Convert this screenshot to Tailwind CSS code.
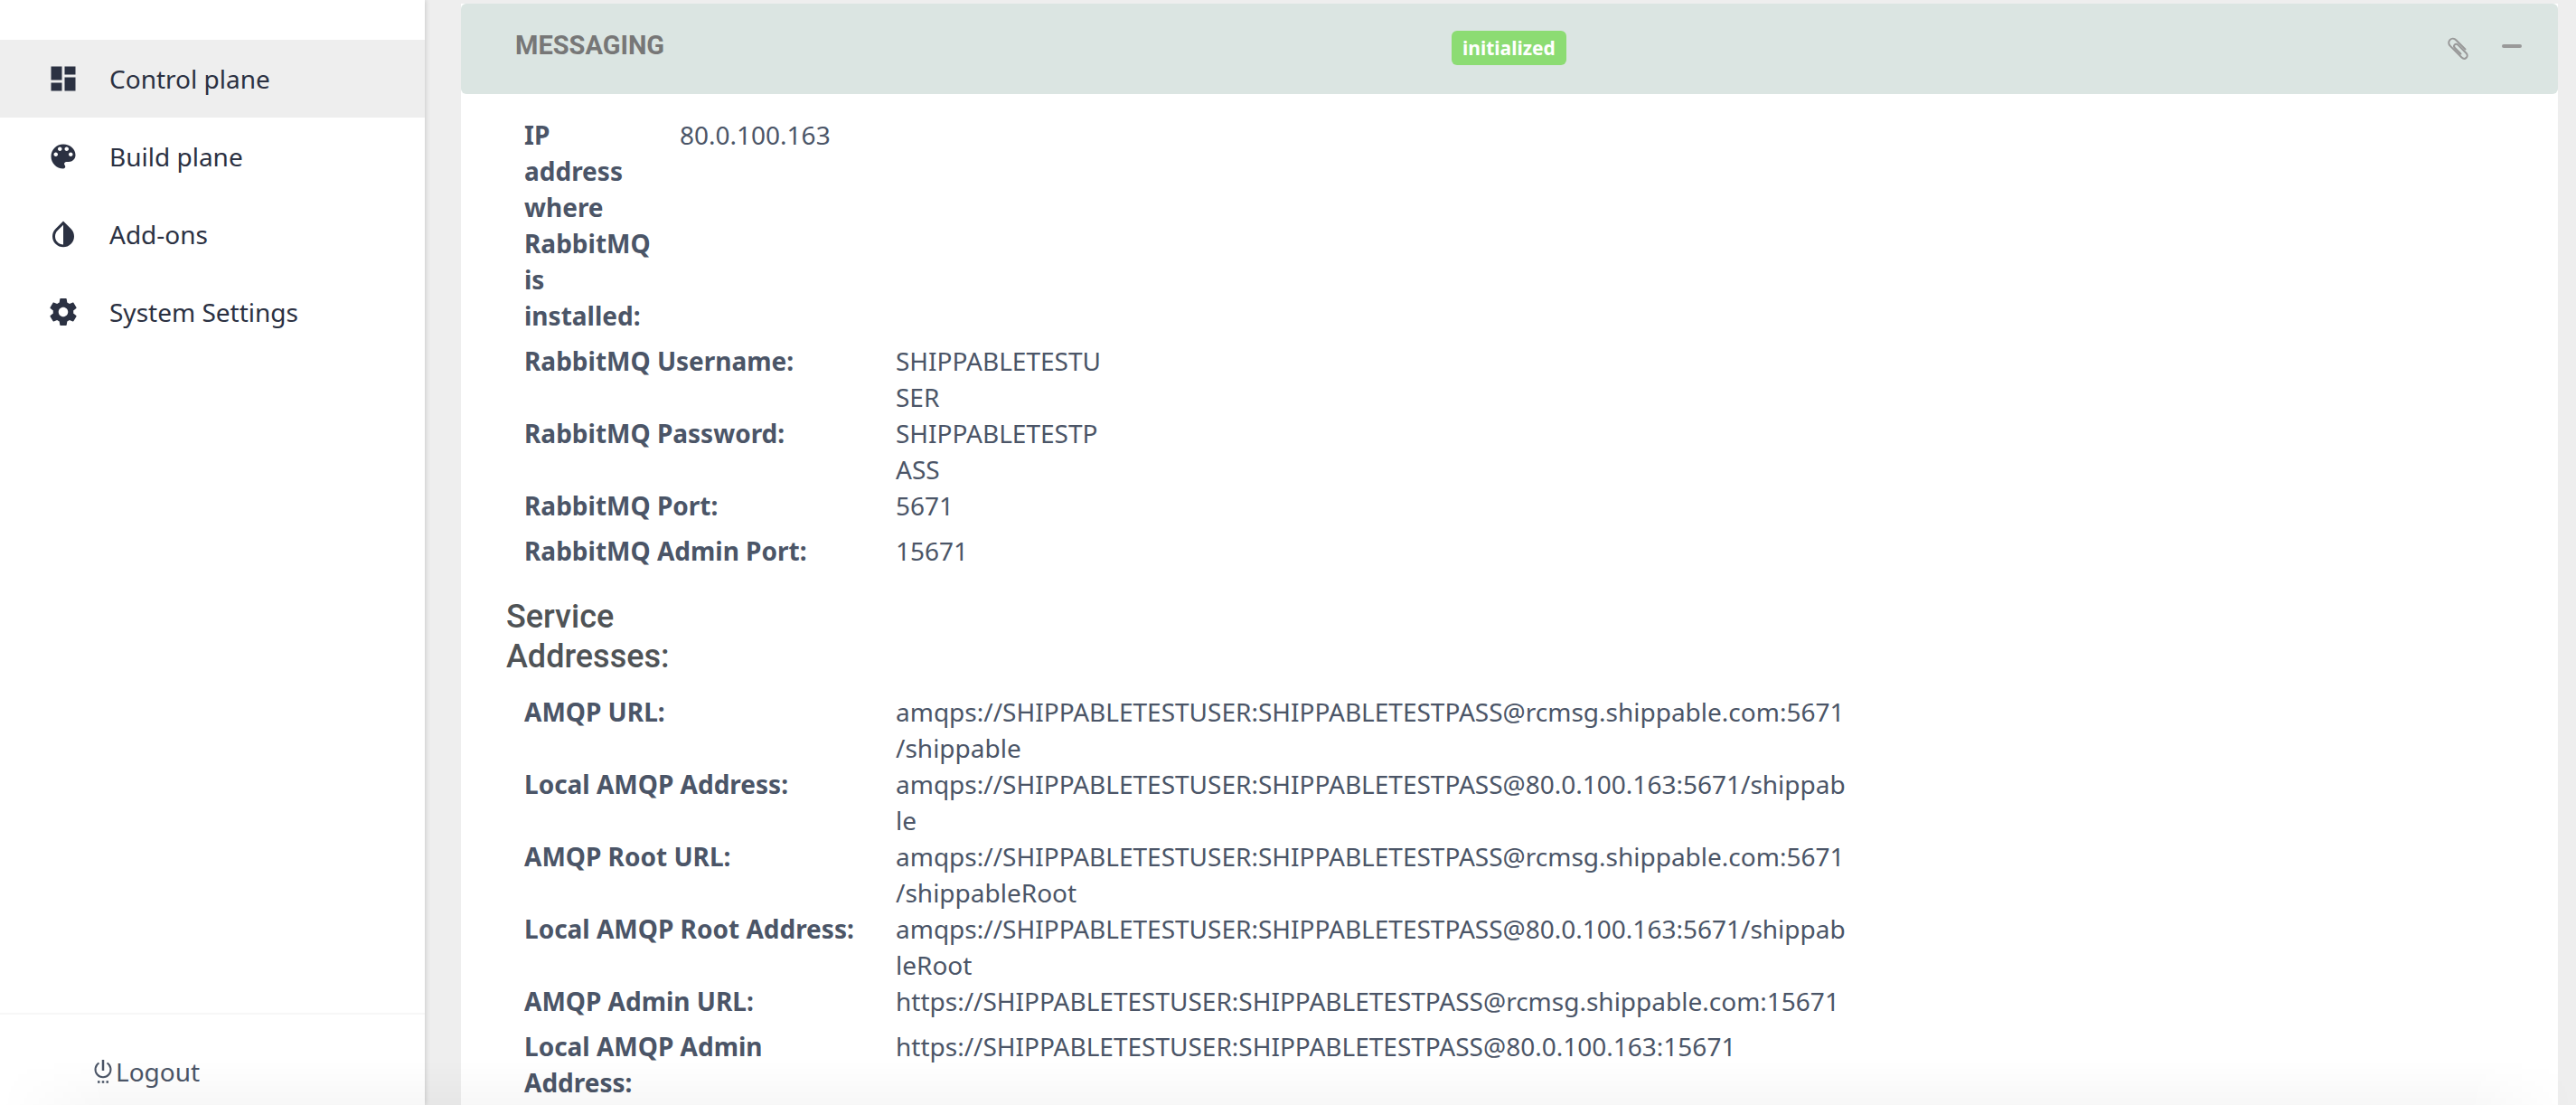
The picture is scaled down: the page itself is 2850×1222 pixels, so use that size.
<!DOCTYPE html>
<html lang="en">
<head>
<meta charset="utf-8">
<meta name="viewport" content="width=device-width, initial-scale=1">
<title>Control plane</title>
<script src="https://cdn.jsdelivr.net/npm/@tailwindcss/browser@4"></script>
</head>
<body class="flex h-screen overflow-hidden bg-[#eeeeee] font-['Noto_Sans',sans-serif] text-[28px] leading-[40px] text-[#4b5567]">

<aside class="z-10 flex w-[470px] shrink-0 flex-col bg-white pt-[44px] shadow-[0_0_6px_rgba(0,0,0,0.2)]">
  <nav class="flex flex-1 flex-col text-[#2b3142]">
    <a href="#" class="flex h-[86px] items-center gap-[33px] bg-[#eeeeee] pl-[52px]">
      <svg class="size-[36px]" viewBox="0 0 24 24" fill="currentColor"><path d="M3 13h8V3H3v10zm0 8h8v-6H3v6zm10 0h8V11h-8v10zm0-18v6h8V3h-8z"/></svg>
      Control plane
    </a>
    <a href="#" class="flex h-[86px] items-center gap-[33px] pl-[52px]">
      <svg class="size-[36px]" viewBox="0 0 24 24" fill="currentColor"><path d="M12 3c-4.97 0-9 4.03-9 9s4.03 9 9 9c.83 0 1.5-.67 1.5-1.5 0-.39-.15-.74-.39-1.01-.23-.26-.38-.61-.38-.99 0-.83.67-1.5 1.5-1.5H16c2.76 0 5-2.24 5-5 0-4.42-4.03-8-9-8zm-5.500 9c-.83 0-1.5-.67-1.5-1.5S5.670 9 6.500 9 8 9.670 8 10.500 7.330 12 6.500 12zm3-4C8.670 8 8 7.330 8 6.500S8.670 5 9.500 5s1.500.67 1.500 1.500S10.330 8 9.500 8zm5 0c-.83 0-1.500-.67-1.500-1.500S13.670 5 14.500 5s1.500.67 1.500 1.500S15.330 8 14.500 8zm3 4c-.83 0-1.500-.67-1.500-1.500S16.670 9 17.500 9s1.500.67 1.500 1.500-.67 1.500-1.500 1.500z"/></svg>
      Build plane
    </a>
    <a href="#" class="flex h-[86px] items-center gap-[33px] pl-[52px]">
      <svg class="size-[36px]" viewBox="0 0 24 24" fill="currentColor"><path d="M17.66 7.93L12 2.270 6.340 7.930c-3.120 3.120-3.120 8.190 0 11.310C7.900 20.800 9.950 21.580 12 21.580c2.050 0 4.100-.78 5.660-2.340 3.120-3.120 3.120-8.190 0-11.310zM12 19.590c-1.600 0-3.110-.62-4.240-1.760C6.620 16.690 6 15.190 6 13.590s.62-3.110 1.760-4.240L12 5.100v14.490z"/></svg>
      Add-ons
    </a>
    <a href="#" class="flex h-[86px] items-center gap-[33px] pl-[52px]">
      <svg class="size-[36px]" viewBox="0 0 24 24" fill="currentColor"><path d="M19.43 12.98c.04-.32.07-.64.07-.98s-.03-.66-.07-.98l2.110-1.650c.19-.15.24-.42.12-.64l-2-3.460c-.12-.22-.39-.3-.61-.22l-2.490 1c-.52-.4-1.080-.73-1.690-.98l-.38-2.650C14.460 2.180 14.250 2 14 2h-4c-.25 0-.46.18-.49.42l-.38 2.650c-.61.25-1.170.59-1.690.98l-2.490-1c-.23-.09-.49 0-.61.22l-2 3.460c-.13.22-.07.49.12.64l2.110 1.650c-.04.32-.07.65-.07.98s.03.66.07.98l-2.110 1.650c-.19.15-.24.42-.12.64l2 3.460c.12.22.39.3.61.22l2.490-1c.52.4 1.080.73 1.690.98l.38 2.650c.03.24.24.42.49.42h4c.25 0 .46-.18.49-.42l.38-2.650c.61-.25 1.170-.59 1.690-.98l2.490 1c.23.09.49 0 .61-.22l2-3.460c.12-.22.07-.49-.12-.64l-2.110-1.650zM12 15.500c-1.930 0-3.500-1.570-3.500-3.500s1.570-3.500 3.500-3.500 3.500 1.570 3.500 3.500-1.570 3.500-3.500 3.500z"/></svg>
      System Settings
    </a>
  </nav>
  <div class="h-[102px] border-t-2 border-[#f7f7f7] pt-[43px] pl-[103px]">
    <a href="#" class="inline-flex items-center gap-[3px]">
      <svg class="h-[28px] w-[22px]" viewBox="0 0 22 28" fill="none" stroke="currentColor" stroke-width="2"><path d="M6.500 4.500a8.500 8.500 0 1 0 9 0"/><path d="M11 1v12" stroke-width="2.500"/><path d="M5 25.500h2.500M9.750 25.500h2.500M14.500 25.500h2.500" stroke-width="2.500"/></svg>
      Logout
    </a>
  </div>
</aside>

<main class="min-w-0 flex-1 pt-1 pr-5 pl-10">
  <section class="h-full bg-white">
    <header class="grid h-[100px] grid-cols-[7fr_8fr] rounded-md bg-[#dbe5e2] pr-[40px] pl-[60px]">
      <h2 class="pt-[26px] font-['Roboto',sans-serif] text-[29px] font-bold text-[#777777]">MESSAGING</h2>
      <div class="flex items-start justify-between pt-[30px]">
        <span class="rounded-md bg-[#8cdc73] px-3 py-1 text-[21px] leading-[30px] font-bold text-white">initialized</span>
        <div class="flex items-center gap-[36px] pt-[6px] text-[#999999]">
          <button type="button" aria-label="Attach">
            <svg class="h-[28px] w-[26px]" viewBox="0 0 26 28" fill="none" stroke="currentColor" stroke-width="2" stroke-linecap="round"><path d="M21.500 14.500L11.500 4.500C9.300 2.300 6.400 2.200 4.500 4.100 2.600 6 2.800 8.800 4.900 10.900L17.500 23.500C19.200 25.200 21.300 25.200 22.700 23.800 24.100 22.400 24 20.200 22.500 18.700L13.400 9.600C12.300 8.500 10.800 8.400 9.800 9.400 8.800 10.400 8.900 11.900 10 13L16.500 19.500"/></svg>
          </button>
          <button type="button" aria-label="Collapse" class="flex h-[28px] items-center pb-[6px]">
            <span class="h-1 w-[22px] rounded-full bg-[#999999]"></span>
          </button>
        </div>
      </div>
    </header>

    <div class="pt-[25px] pl-[50px]">
      <dl class="pl-5">
        <div class="grid grid-cols-[142px_1fr] gap-x-[30px]">
          <dt class="mb-[10px] font-bold">IP address where RabbitMQ is installed:</dt>
          <dd>80.0.100.163</dd>
        </div>
        <div class="grid grid-cols-[381px_236px] gap-x-[30px]">
          <dt class="mb-[10px] font-bold">RabbitMQ Username:</dt>
          <dd class="break-all">SHIPPABLETESTUSER</dd>
          <dt class="mb-[10px] font-bold">RabbitMQ Password:</dt>
          <dd class="break-all">SHIPPABLETESTPASS</dd>
          <dt class="mb-[10px] font-bold">RabbitMQ Port:</dt>
          <dd>5671</dd>
          <dt class="mb-[10px] font-bold">RabbitMQ Admin Port:</dt>
          <dd>15671</dd>
        </div>
      </dl>

      <h3 class="mt-[21px] mb-[19px] w-[200px] font-['Roboto',sans-serif] text-[36px] leading-[44px] font-medium text-[#4f5356]">Service Addresses:</h3>

      <dl class="grid grid-cols-[381px_1054px] gap-x-[30px] pl-5">
        <dt class="mb-[10px] font-bold">AMQP URL:</dt>
        <dd class="break-all">amqps://SHIPPABLETESTUSER:SHIPPABLETESTPASS@rcmsg.shippable.com:5671<wbr>/shippable</dd>
        <dt class="mb-[10px] font-bold">Local AMQP Address:</dt>
        <dd class="break-all">amqps://SHIPPABLETESTUSER:SHIPPABLETESTPASS@80.0.100.163:5671/shippable</dd>
        <dt class="mb-[10px] font-bold">AMQP Root URL:</dt>
        <dd class="break-all">amqps://SHIPPABLETESTUSER:SHIPPABLETESTPASS@rcmsg.shippable.com:5671<wbr>/shippableRoot</dd>
        <dt class="mb-[10px] font-bold">Local AMQP Root Address:</dt>
        <dd class="break-all">amqps://SHIPPABLETESTUSER:SHIPPABLETESTPASS@80.0.100.163:5671/shippableRoot</dd>
        <dt class="mb-[10px] font-bold">AMQP Admin URL:</dt>
        <dd class="break-all">https://SHIPPABLETESTUSER:SHIPPABLETESTPASS@rcmsg.shippable.com:15671</dd>
        <dt class="mb-[10px] font-bold">Local AMQP Admin Address:</dt>
        <dd class="break-all">https://SHIPPABLETESTUSER:SHIPPABLETESTPASS@80.0.100.163:15671</dd>
      </dl>
    </div>
  </section>
</main>

<!-- soft shade along the bottom edge of the window -->
<div class="pointer-events-none fixed inset-x-0 bottom-0 z-20 h-[50px] bg-linear-to-b from-transparent to-black/3 [mask-image:linear-gradient(to_right,transparent,black_120px,black_calc(100%-120px),transparent)]"></div>
</body>
</html>
